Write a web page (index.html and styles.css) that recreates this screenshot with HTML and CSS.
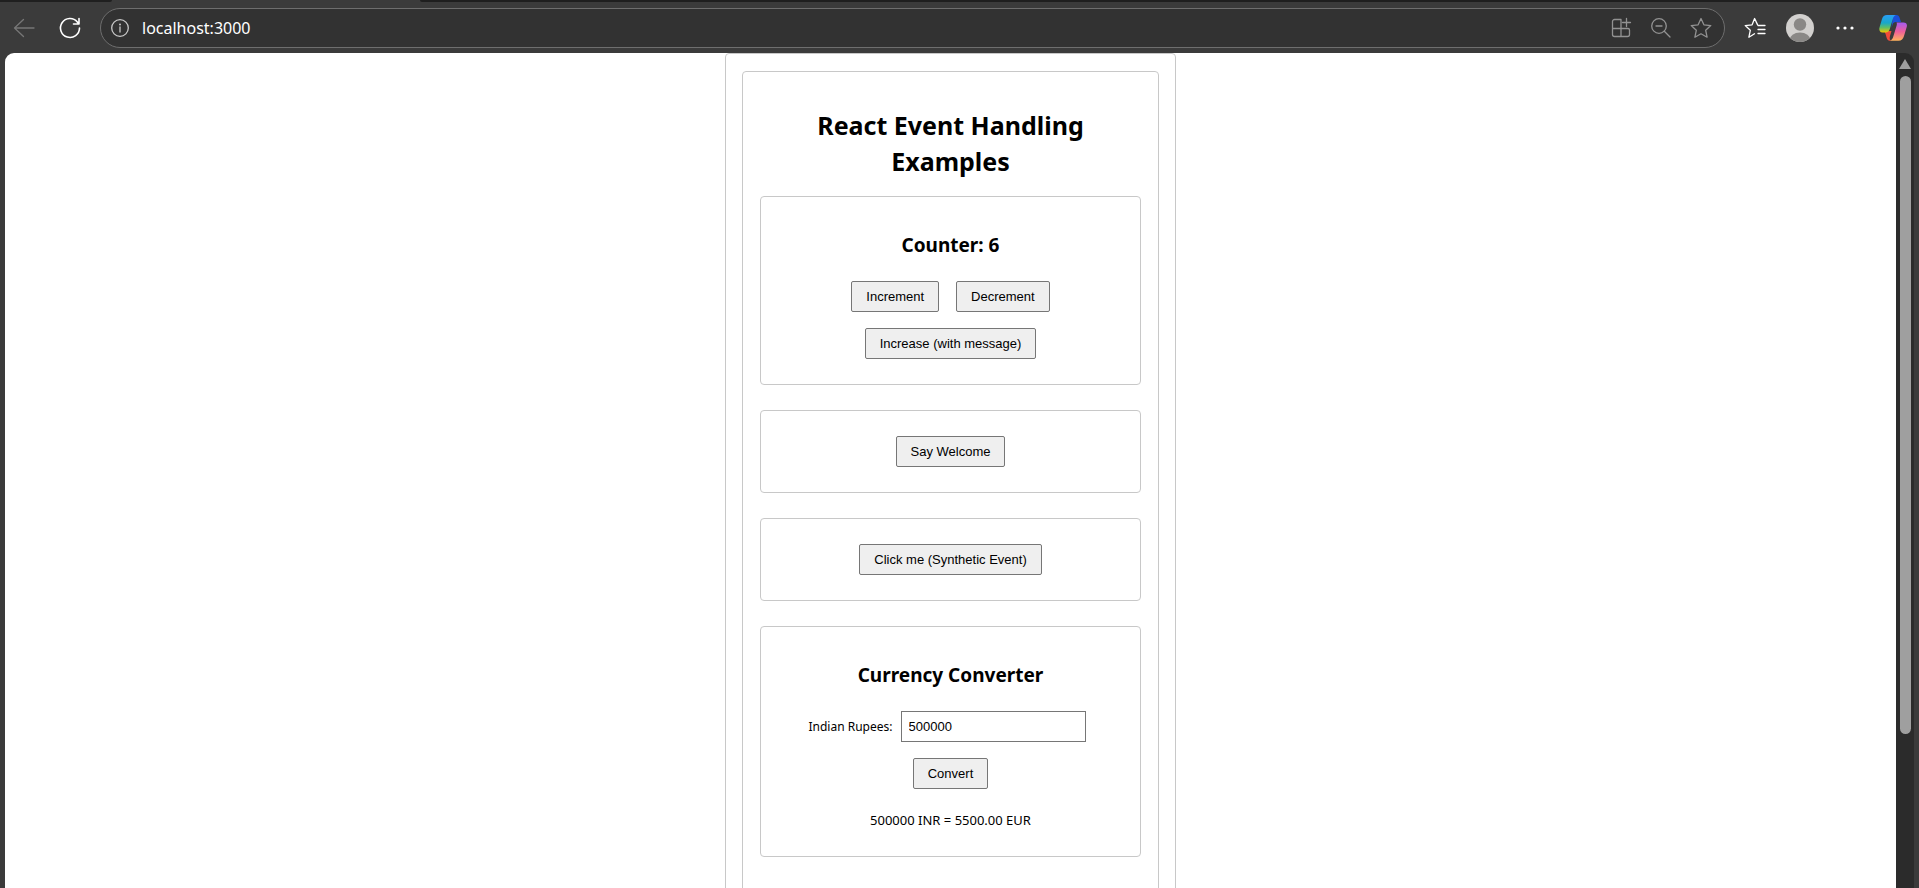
FILE: index.html
```html
<!DOCTYPE html>
<html lang="en">
<head>
<meta charset="utf-8">
<title>React Event Handling Examples</title>
<link rel="stylesheet" href="styles.css">
</head>
<body>
<div class="tabstrip"><div class="tab-before"></div><div class="tab-active"></div><div class="tab-after"></div></div>
<header class="toolbar">
  <button class="tool back" aria-label="Back"><svg width="24" height="24" viewBox="0 0 24 24"><path d="M22 12H2.500M11.500 3.500L2.500 12l9 8.500"/></svg></button>
  <button class="tool reload" aria-label="Reload"><svg width="24" height="24" viewBox="0 0 24 24"><path d="M21.500 12a9.500 9.500 0 1 1-2.200-6.100L21 8M21 2.500V8h-5.500"/></svg></button>
  <div class="address">
    <button class="tool info" aria-label="Site information"><svg width="20" height="20" viewBox="0 0 20 20"><circle cx="10" cy="10" r="8.300"/><path d="M10 9v5"/><circle class="fill" cx="10" cy="6.500" r="1"/></svg></button>
    <input class="url" type="text" value="localhost:3000" aria-label="Address">
    <button class="tool dim" aria-label="Add app"><svg width="24" height="24" viewBox="0 0 24 24"><path d="M12 3.500H5.500a2 2 0 0 0-2 2v13a2 2 0 0 0 2 2h13a2 2 0 0 0 2-2V14a1.500 1.500 0 0 0-1.500-1.500H3.500M12 3.500v17M17.500 2.500v8M13.500 6.500h8"/></svg></button>
    <button class="tool dim" aria-label="Zoom out"><svg width="24" height="24" viewBox="0 0 24 24"><circle cx="10" cy="10" r="7.300"/><path d="M7 10h6M15.300 15.300l5.700 5.700"/></svg></button>
    <button class="tool dim" aria-label="Add favorite"><svg width="24" height="24" viewBox="0 0 24 24"><path d="M12 2.500l2.900 6.300 6.900.8-5.100 4.700 1.400 6.900-6.100-3.400-6.100 3.400 1.400-6.900-5.100-4.700 6.900-.8z"/></svg></button>
  </div>
  <button class="tool bright" aria-label="Favorites"><svg width="24" height="24" viewBox="0 0 24 24"><path d="M11.500 17.800l-5.600 3.400 1.400-6.900-5.100-4.700 6.900-.8 2.500-6.300 2.900 6.100M15 9.500h7M15 13.500h7M15 17.500h7"/></svg></button>
  <button class="tool" aria-label="Profile"><svg width="28" height="28" viewBox="0 0 28 28"><defs><clipPath id="disc"><circle cx="14" cy="14" r="14"/></clipPath></defs><g clip-path="url(#disc)" stroke="none"><path fill="#d2d0ce" d="M0 0h28v28H0z"/><circle cx="14" cy="10.500" r="6.200" fill="#8a8886"/><ellipse cx="14" cy="26.500" rx="10.500" ry="8" fill="#8a8886"/></g></svg></button>
  <button class="tool bright" aria-label="Settings and more"><svg width="24" height="24" viewBox="0 0 24 24"><g class="fill"><circle cx="5" cy="12" r="1.600"/><circle cx="12" cy="12" r="1.600"/><circle cx="19" cy="12" r="1.600"/></g></svg></button>
  <button class="tool copilot" aria-label="Copilot"><svg width="28" height="28" viewBox="0 0 28 28"><defs>
    <linearGradient id="ga" x1="0" y1="0" x2="0" y2="1"><stop offset="0" stop-color="#2a9df5"/><stop offset=".45" stop-color="#18a7c9"/><stop offset=".72" stop-color="#5fbe66"/><stop offset="1" stop-color="#f2c800"/></linearGradient>
    <linearGradient id="gb" x1="0" y1="0" x2="0" y2="1"><stop offset="0" stop-color="#a45bf2"/><stop offset=".5" stop-color="#ef5f9a"/><stop offset="1" stop-color="#ffb35c"/></linearGradient></defs>
    <g stroke="none"><path fill="#1b4fd8" d="M14 1h3.500c1.700 0 2.500 1 3 2.500L22 8h-5c-2 0-3 1-3.500 2.700L12.500 14z"/><path fill="#f04b3a" d="M5 17h7.500L11 22c-.7 2.300-.2 4 1 5-2.500 0-3.700-1-4.300-3l-1-3.500C6.300 19 5.800 18 5 17z"/><path fill="url(#ga)" d="M8 1h9c-1.700.5-2.600 2-3.200 4l-3 10c-.8 2.500-2 3.500-4.300 3.500H3.500C.8 18.500-.2 16.200.5 13.500L3 5c.8-2.800 2.300-4 5-4z"/><path fill="url(#gb)" d="M17.500 8.500h7c2.700 0 4 1.700 3.200 4.500L25 22c-.9 3-2.500 4.700-5.500 4.700H11c2-.7 2.700-2.200 3.300-4.200l3.200-10.500c.5-1.700.5-2.700 0-3.500z"/></g></svg></button>
</header>
<div class="window">
  <main class="page">
    <div class="frame">
      <div class="app">
        <h1>React Event Handling Examples</h1>
        <section class="card">
          <h2>Counter: 6</h2>
          <div class="row"><button class="btn">Increment</button><button class="btn">Decrement</button></div>
          <div class="row"><button class="btn">Increase (with message)</button></div>
        </section>
        <section class="card"><div class="row"><button class="btn">Say Welcome</button></div></section>
        <section class="card"><div class="row"><button class="btn">Click me (Synthetic Event)</button></div></section>
        <section class="card">
          <h2>Currency Converter</h2>
          <div class="row field"><label for="inr">Indian Rupees:</label><input id="inr" type="text" value="500000"></div>
          <div class="row"><button class="btn">Convert</button></div>
          <p>500000 INR = 5500.00 EUR</p>
        </section>
      </div>
    </div>
  </main>
  <div class="scrollbar"><div class="arrow"></div><div class="track"><div class="thumb"></div></div></div>
</div>
</body>
</html>
```
FILE: styles.css
```css
* { box-sizing: border-box; }

body {
  margin: 0;
  height: 100vh;
  display: flex;
  flex-direction: column;
  overflow: hidden;
  background: #3b3b3b;
  color: #000;
  font-family: "Noto Sans", "Open Sans", sans-serif;
  font-size: 13px;
}

.tabstrip { display: flex; height: 2px; flex: none; }
.tab-before { width: 112px; background: #1f1f1f; border-bottom-right-radius: 2px; }
.tab-active { width: 308px; }
.tab-after { flex: 1; background: #1f1f1f; border-bottom-left-radius: 2px; }

.toolbar {
  display: flex;
  align-items: center;
  flex: none;
  height: 51px;
  padding: 0 12px;
}

.tool {
  display: flex;
  flex: none;
  padding: 0;
  border: 0;
  background: none;
  color: #9b9b9b;
}
.tool svg { fill: none; stroke: currentColor; stroke-width: 1.3; stroke-linecap: round; stroke-linejoin: round; }
.tool .fill { fill: currentColor; stroke: none; }
.toolbar > .tool + .tool { margin-left: 19px; }
.toolbar > .tool + .reload,
.toolbar > .tool + .copilot { margin-left: 22px; }
.back { color: #777; }
.reload { color: #fff; }
.reload svg { stroke-width: 1.6; }
.info { color: #c8c8c8; }
.dim { color: #929292; margin-left: 16px; }
.bright { color: #fff; }

.address {
  display: flex;
  align-items: center;
  flex: 1;
  height: 40px;
  margin: 0 18px;
  padding: 0 11px 0 9px;
  border: 1px solid #6e6e6e;
  border-radius: 20px;
  background: #323232;
}
.url {
  flex: 1;
  min-width: 0;
  margin-left: 12px;
  padding: 0;
  border: 0;
  background: none;
  color: #fff;
  font-family: "Noto Sans", sans-serif;
  font-size: 16px;
}

.window { display: flex; flex: 1; min-height: 0; padding: 0 5px; }
.page {
  flex: 1;
  overflow: hidden;
  background: #fff;
  border-top-left-radius: 9px;
}

.frame {
  width: 451px;
  max-width: 100%;
  margin: 0 auto;
  padding: 17px 16px;
  border: 1px solid #c8c8c8;
  border-radius: 4px;
}
.app {
  padding: 35px 17px 60px;
  border: 1px solid #c8c8c8;
  border-radius: 4px;
  text-align: center;
}

h1, h2, p { margin: 0; }
h1 { padding: 0 32px; margin-bottom: 17px; font-size: 25px; line-height: 36px; }
h2 { margin: 10px 0 23px; font-size: 19px; line-height: 26px; }

.card { padding: 25px; border: 1px solid #c8c8c8; border-radius: 4px; }
.card + .card { margin-top: 25px; }

.row { display: flex; justify-content: center; gap: 17px; }
.row + .row { margin-top: 16px; }
.btn {
  height: 31px;
  padding: 0 14px;
  border: 1px solid #767676;
  border-radius: 2px;
  background: #efefef;
  color: #000;
  font-family: "Liberation Sans", Arial, sans-serif;
  font-size: 13px;
}

.field { align-items: center; gap: 8px; padding-right: 7px; font-size: 12px; }
.field input {
  width: 185px;
  height: 31px;
  padding: 0 7px;
  border: 1px solid #767676;
  background: #fff;
  color: #000;
  font-family: "Liberation Sans", Arial, sans-serif;
  font-size: 13px;
}
.card p { margin-top: 20px; font-size: 13px; line-height: 22px; }

.scrollbar {
  display: flex;
  flex-direction: column;
  align-items: center;
  flex: none;
  width: 18px;
  padding-top: 6px;
  background: #2b2b2b;
  border-top-right-radius: 9px;
}
.arrow {
  border: 6px solid transparent;
  border-top: 0;
  border-bottom: 10px solid #9f9f9f;
}
.track { flex: 1; padding-top: 7px; }
.thumb { width: 11px; height: 81%; border-radius: 6px; background: #9f9f9f; }
```
